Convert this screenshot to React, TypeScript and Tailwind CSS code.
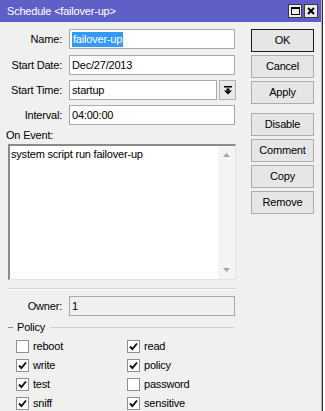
import React from "react";

const font = "font-['Liberation_Sans',Arial,sans-serif] text-[11px] tracking-[-0.2px]";

function Check({ checked }: { checked: boolean }) {
  return (
    <span className="w-[13px] h-[13px] border border-[#8f8f8f] bg-white flex items-center justify-center shrink-0">
      {checked && (
        <svg width="9" height="9" viewBox="0 0 9 9">
          <path d="M1 4.5 L3.4 7 L8 1.5" stroke="#111" strokeWidth="1.9" fill="none" />
        </svg>
      )}
    </span>
  );
}

function Field({ label, children, className = "" }: { label: string; children: React.ReactNode; className?: string }) {
  return (
    <div className={"flex items-center h-[20px] " + className}>
      <div className="w-[63px] text-right pr-[1px] text-black">{label}</div>
      <div className="ml-[6px] flex h-full">{children}</div>
    </div>
  );
}

function Btn({ label, def = false, className = "" }: { label: string; def?: boolean; className?: string }) {
  return (
    <div
      className={
        "w-[63px] h-[23px] flex items-center justify-center bg-[#e6e6e6] border text-black " +
        (def ? "border-[#1e1e1e] " : "border-[#adadad] ") +
        className
      }
    >
      {label}
    </div>
  );
}

export default function App() {
  const rows: [string, boolean, string, boolean][] = [
    ["reboot", false, "read", true],
    ["write", true, "policy", true],
    ["test", true, "password", false],
    ["sniff", true, "sensitive", true],
  ];
  return (
    <div className={"w-[325px] h-[411px] overflow-hidden flex bg-white " + font}>
      <div className="w-[322px] h-full flex flex-col bg-[#f0f0f0] border-r border-[#b4b4b4]">
        {/* title bar */}
        <div className="h-[22px] bg-[#5f60c7] flex items-center pl-[7px] pr-[3px] text-white shrink-0">
          <span className="text-[11px]">Schedule &lt;failover-up&gt;</span>
          <div className="ml-auto flex gap-[2px] items-center">
            <div className="w-[14px] h-[14px] bg-[#ececec] border border-[#3a3a3a] flex items-center justify-center">
              <div className="w-[9px] h-[8px] border border-black border-t-2" />
            </div>
            <div className="w-[14px] h-[14px] bg-[#ececec] border border-[#3a3a3a] flex items-center justify-center">
              <svg width="8" height="8" viewBox="0 0 8 8">
                <path d="M1 1 L7 7 M7 1 L1 7" stroke="#000" strokeWidth="2" />
              </svg>
            </div>
          </div>
        </div>

        {/* body */}
        <div className="flex flex-1">
          {/* left column */}
          <div className="w-[245px] flex flex-col">
            <Field label="Name:" className="mt-[7px]">
              <div className="w-[166px] h-full bg-white border border-[#a9a9a9] flex items-center pl-[2px]">
                <span className="bg-[#3399ff] text-white h-[15px] flex items-center px-[1px]">failover-up</span>
              </div>
            </Field>
            <Field label="Start Date:" className="mt-[6px]">
              <div className="w-[166px] h-full bg-white border border-[#a9a9a9] flex items-center pl-[2px]">Dec/27/2013</div>
            </Field>
            <Field label="Start Time:" className="mt-[5px]">
              <div className="w-[148px] h-full bg-white border border-[#a9a9a9] flex items-center pl-[2px]">startup</div>
              <div className="ml-[2px] w-[17px] h-full bg-[#e9e9e9] border border-[#b0b0b0] flex items-center justify-center">
                <svg width="8" height="9" viewBox="0 0 8 9">
                  <rect x="0" y="0" width="8" height="1.5" fill="#000" />
                  <rect x="2.5" y="2.5" width="3" height="2" fill="#000" />
                  <path d="M0 4.5 L8 4.5 L4 8.5 Z" fill="#000" />
                </svg>
              </div>
            </Field>
            <Field label="Interval:" className="mt-[5px]">
              <div className="w-[166px] h-full bg-white border border-[#a9a9a9] flex items-center pl-[2px]">04:00:00</div>
            </Field>

            <div className="pl-[6px] mt-[3px] h-[14px] flex items-center">On Event:</div>
            <div className="ml-[8px] mt-[2px] w-[228px] h-[136px] bg-white border-t-2 border-l-2 border-t-[#8a8a8a] border-l-[#8a8a8a] border-b border-r border-b-[#e3e3e3] border-r-[#e3e3e3] flex">
              <div className="flex-1 pl-[1px] pt-[2px] leading-[13px]">system script run failover-up</div>
              <div className="w-[17px] h-full bg-[#f4f4f4] flex flex-col items-center justify-between py-[7px]">
                <svg width="7" height="4" viewBox="0 0 7 4"><path d="M0 4 L3.5 0 L7 4 Z" fill="#a6a6a6" /></svg>
                <svg width="7" height="4" viewBox="0 0 7 4"><path d="M0 0 L3.5 4 L7 0 Z" fill="#a6a6a6" /></svg>
              </div>
            </div>

            <div className="ml-[8px] mt-[8px] w-[228px] h-[2px] border-t border-t-[#d6d6d6] border-b border-b-white" />

            <Field label="Owner:" className="mt-[6px] h-[19px]">
              <div className="w-[166px] h-full bg-[#f0f0f0] border border-[#a9a9a9] flex items-center pl-[2px]">1</div>
            </Field>

            <div className="mt-[4px] h-[14px] flex items-center pl-[8px]">
              <div className="w-[5px] h-px bg-[#8c8c8c]" />
              <span className="ml-[4px]">Policy</span>
              <div className="ml-[5px] w-[184px] h-px bg-[#d0d0d0]" />
            </div>

            <div className="mt-[3px] ml-[16px] flex flex-col">
              {rows.map(([a, ac, b, bc]) => (
                <div key={a} className="h-[19px] grid grid-cols-[111px_1fr] items-center">
                  <div className="flex items-center gap-[4px]"><Check checked={ac} /><span>{a}</span></div>
                  <div className="flex items-center gap-[4px]"><Check checked={bc} /><span>{b}</span></div>
                </div>
              ))}
            </div>
          </div>

          {/* right buttons */}
          <div className="ml-[6px] flex flex-col pt-[7px]">
            <Btn label="OK" def />
            <Btn label="Cancel" className="mt-[3px]" />
            <Btn label="Apply" className="mt-[3px]" />
            <Btn label="Disable" className="mt-[9px]" />
            <Btn label="Comment" className="mt-[3px]" />
            <Btn label="Copy" className="mt-[3px]" />
            <Btn label="Remove" className="mt-[3px]" />
          </div>
        </div>
      </div>
      <div className="flex-1 h-full bg-white border-l border-[#303030]" />
    </div>
  );
}
